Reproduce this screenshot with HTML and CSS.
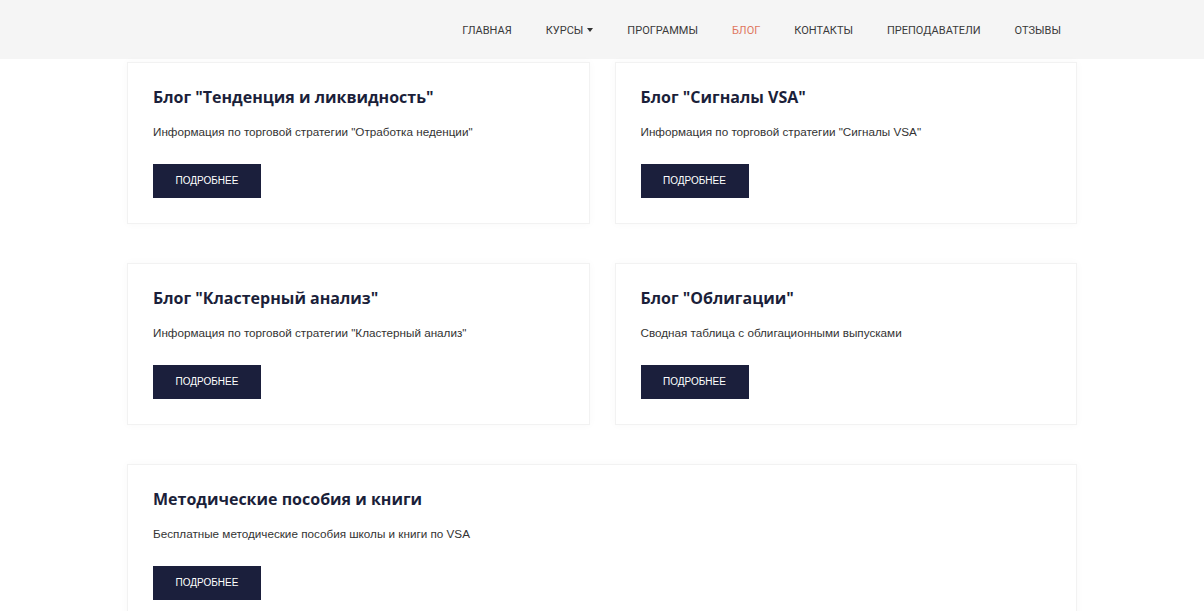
FILE: index.html
```html
<!DOCTYPE html>
<html>
<head>
    <title>Блог</title>
    <link rel="stylesheet" href="styles.css">
</head>
<body>
    <header class="topbar">
        <nav class="menu">
            <a href="#" class="menu-item">Главная</a>
            <a href="#" class="menu-item">Курсы <span class="caret"></span></a>
            <a href="#" class="menu-item">Программы</a>
            <a href="#" class="menu-item active">Блог</a>
            <a href="#" class="menu-item">Контакты</a>
            <a href="#" class="menu-item">Преподаватели</a>
            <a href="#" class="menu-item">Отзывы</a>
        </nav>
    </header>

    <main class="blog-list">
        <div class="blog-card">
            <h3 class="blog-title">Блог "Тенденция и ликвидность"</h3>
            <p class="blog-text">Информация по торговой стратегии "Отработка неденции"</p>
            <a href="#" class="more-btn">Подробнее</a>
        </div>
        <div class="blog-card">
            <h3 class="blog-title">Блог "Сигналы VSA"</h3>
            <p class="blog-text">Информация по торговой стратегии "Сигналы VSA"</p>
            <a href="#" class="more-btn">Подробнее</a>
        </div>
        <div class="blog-card">
            <h3 class="blog-title">Блог "Кластерный анализ"</h3>
            <p class="blog-text">Информация по торговой стратегии "Кластерный анализ"</p>
            <a href="#" class="more-btn">Подробнее</a>
        </div>
        <div class="blog-card">
            <h3 class="blog-title">Блог "Облигации"</h3>
            <p class="blog-text">Сводная таблица с облигационными выпусками</p>
            <a href="#" class="more-btn">Подробнее</a>
        </div>
        <div class="blog-card wide">
            <h3 class="blog-title">Методические пособия и книги</h3>
            <p class="blog-text">Бесплатные методические пособия школы и книги по VSA</p>
            <a href="#" class="more-btn">Подробнее</a>
        </div>
    </main>
</body>
</html>
```

FILE: styles.css
```css
body {
    margin: 0;
    font-family: "Liberation Sans", Arial, sans-serif;
    background: #fff;
    color: #333;
}
.topbar {
    background: #f5f5f5;
    height: 59px;
}
.menu {
    width: 950px;
    height: 100%;
    margin: 0 auto;
    display: flex;
    justify-content: flex-end;
    align-items: center;
    padding-top: 1px;
    box-sizing: border-box;
}
.menu-item {
    padding: 0 17px;
    font-family: Roboto, "Liberation Sans", sans-serif;
    font-size: 11px;
    text-transform: uppercase;
    color: #3a3a3a;
    text-decoration: none;
    display: flex;
    align-items: center;
}
.menu-item:last-child {
    padding-right: 16px;
}
.menu-item.active {
    color: #e0775f;
}
.caret {
    display: inline-block;
    margin-left: 4px;
    border-left: 3.5px solid transparent;
    border-right: 3.5px solid transparent;
    border-top: 4px solid #333;
}
.blog-list {
    width: 950px;
    margin: 3px auto 0;
    display: grid;
    grid-template-columns: 1fr 1fr;
    column-gap: 25px;
    row-gap: 39px;
}
.blog-card {
    background: #fff;
    border: 1px solid #f2f2f2;
    box-shadow: 0 0 8px rgba(0,0,0,0.03);
    padding: 23px 25px 25px;
    box-sizing: border-box;
}
.blog-card.wide {
    grid-column: 1 / 3;
}
.blog-title {
    margin: 0;
    font-family: "Open Sans", "Noto Sans", sans-serif;
    font-weight: 700;
    font-size: 16px;
    line-height: 22px;
    color: #1b1f3a;
}
.blog-text {
    margin: 15px 0 0;
    font-size: 11.7px;
    line-height: 18px;
    color: #333;
}
.more-btn {
    display: inline-block;
    margin-top: 23px;
    width: 108px;
    height: 34px;
    line-height: 34px;
    text-align: center;
    background: #1b1f3c;
    color: #fff;
    font-size: 10px;
    text-transform: uppercase;
    text-decoration: none;
}
```
